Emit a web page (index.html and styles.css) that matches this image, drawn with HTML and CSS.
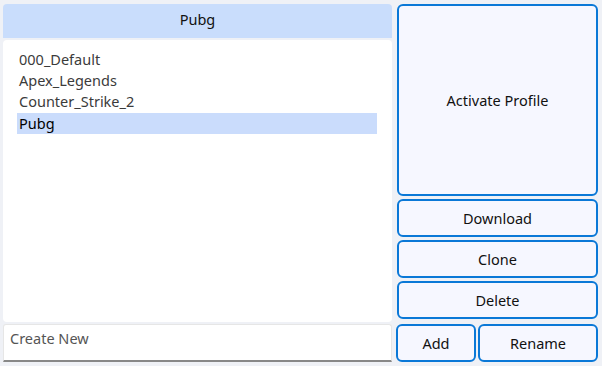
FILE: index.html
```html
<!DOCTYPE html>
<html lang="en">
<head>
    <meta charset="UTF-8">
    <meta name="viewport" content="width=device-width, initial-scale=1.0">
    <link rel="stylesheet" href="styles.css">
    <title>Profiles</title>
</head>
<body>
    <div class="app">
        <!-- Left side: current profile and the list -->
        <div class="left-col">
            <div class="current-name">Pubg</div>
            <div class="profile-list">
                <div class="profile-item">000_Default</div>
                <div class="profile-item">Apex_Legends</div>
                <div class="profile-item">Counter_Strike_2</div>
                <div class="profile-item selected">Pubg</div>
            </div>
            <input type="text" class="new-name" placeholder="Create New">
        </div>

        <!-- Right side: actions -->
        <div class="right-col">
            <button class="action-btn activate-btn">Activate Profile</button>
            <button class="action-btn">Download</button>
            <button class="action-btn">Clone</button>
            <button class="action-btn">Delete</button>
            <div class="btn-row">
                <button class="action-btn add-btn">Add</button>
                <button class="action-btn rename-btn">Rename</button>
            </div>
        </div>
    </div>
</body>
</html>
```

FILE: styles.css
```css
/* Whole window */
body, html {
    margin: 0;
    height: 100%;
    font-family: "Noto Sans", "Open Sans", sans-serif;
    background-color: #eff1f6;
}

.app {
    display: flex;
    gap: 4px;
    padding: 4px 4px 4px 3px;
    height: 100%;
    box-sizing: border-box;
}

/* Left column */
.left-col {
    width: 389px;
    display: flex;
    flex-direction: column;
}

.current-name {
    height: 34px;
    line-height: 30px;
    text-align: center;
    font-size: 14.5px;
    color: #111;
    background-color: #c9ddfc;
    border-radius: 4px 4px 0 0;
}

.profile-list {
    flex: 1;
    margin-top: 2px;
    padding: 9px 14px 0 14px;
    background-color: #fff;
    border-radius: 4px;
}

.profile-item {
    height: 21.2px;
    line-height: 21px;
    padding-left: 2px;
    font-size: 14.5px;
    color: #3b3b3b;
}

.profile-item.selected {
    background-color: #cadcfc;
    color: #000;
    margin-right: 1px;
}

/* Text box for new profile names */
.new-name {
    height: 38px;
    margin-top: 2px;
    padding: 0 6px 10px 6px;
    box-sizing: border-box;
    font-family: inherit;
    font-size: 14.5px;
    color: #222;
    background-color: #fff;
    border: 1px solid #e6e6e6;
    border-bottom: 2px solid #888;
    border-radius: 3px 3px 0 0;
}

.new-name::placeholder {
    color: #555;
}

.new-name:focus {
    outline: none;
}

/* Right column with buttons */
.right-col {
    flex: 1;
    display: flex;
    flex-direction: column;
    gap: 3px;
}

.action-btn {
    height: 38px;
    font-family: inherit;
    font-size: 14.5px;
    color: #111;
    background-color: #f6f7ff;
    border: 2px solid #0a78d7;
    border-radius: 6px;
    padding: 0;
    margin-left: 1px;
}

.activate-btn {
    height: 193px;
}

.btn-row {
    display: flex;
    gap: 2px;
    margin-top: 2px;
}

.btn-row .action-btn {
    margin-left: 0;
}

.add-btn {
    width: 80px;
}

.rename-btn {
    flex: 1;
}
```
